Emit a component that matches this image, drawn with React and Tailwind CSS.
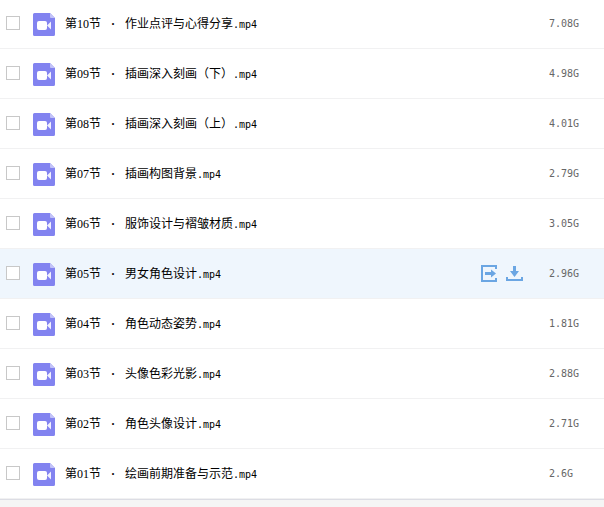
import React, { useState } from "react";
import clsx from "clsx";

const FILES = [
  { no: "10", title: "作业点评与心得分享", size: "7.08G" },
  { no: "09", title: "插画深入刻画（下）", size: "4.98G" },
  { no: "08", title: "插画深入刻画（上）", size: "4.01G" },
  { no: "07", title: "插画构图背景", size: "2.79G" },
  { no: "06", title: "服饰设计与褶皱材质", size: "3.05G" },
  { no: "05", title: "男女角色设计", size: "2.96G" },
  { no: "04", title: "角色动态姿势", size: "1.81G" },
  { no: "03", title: "头像色彩光影", size: "2.88G" },
  { no: "02", title: "角色头像设计", size: "2.71G" },
  { no: "01", title: "绘画前期准备与示范", size: "2.6G" },
];

function VideoIcon() {
  return (
    <svg className="mt-0.5 ml-[13px] shrink-0" width="22" height="23" viewBox="0 0 22 23" aria-hidden="true">
      <path d="M1.5 0H17l5 5v16.5a1.5 1.5 0 0 1-1.5 1.5h-19A1.5 1.5 0 0 1 0 21.5v-20A1.5 1.5 0 0 1 1.5 0Z" fill="#8283f0" />
      <path d="M17 0l5 5h-4a1 1 0 0 1-1-1Z" fill="#c3c3f8" />
      <rect x="4" y="8" width="10" height="9" rx="2" fill="#fff" />
      <path d="M14 12.5l4-4v8Z" fill="#f0f0fe" />
    </svg>
  );
}

function ShareIcon() {
  return (
    <svg width="17" height="17" viewBox="0 0 17 17" aria-hidden="true">
      <path d="M15 4V1H1v15h14v-3" fill="none" stroke="#6ba6e3" strokeWidth="2" />
      <path d="M4 7h6V4.5l5 4-5 4V10H4Z" fill="#6ba6e3" />
    </svg>
  );
}

function DownloadIcon() {
  return (
    <svg width="17" height="17" viewBox="0 0 17 17" aria-hidden="true">
      <path d="M1 12v3h15v-3" fill="none" stroke="#6ba6e3" strokeWidth="2" />
      <path d="M7 1h3v5h3l-4.5 6L4 6h3Z" fill="#6ba6e3" />
    </svg>
  );
}

function FileRow({ file, active, onSelect }) {
  const id = `file-${file.no}`;

  return (
    <li
      className={clsx(
        "flex h-[50px] items-center border-b border-[#f1f1f2] pl-1.5",
        active && "bg-[#eff6fd]"
      )}
      onClick={onSelect}
    >
      <input
        id={id}
        type="checkbox"
        className="mb-0.5 size-3.5 shrink-0 appearance-none border border-[#c8c8c8] bg-white checked:bg-[#6ba6e3]"
      />
      <VideoIcon />
      <label
        htmlFor={id}
        className="ml-2.5 min-w-0 flex-1 truncate text-xs text-black"
      >
        第{file.no}节
        <span className="inline-block w-6 text-center font-bold">·</span>
        {file.title}
        <span className="font-['DejaVu_Sans_Mono',monospace] text-[10px]">.mp4</span>
      </label>
      {active && (
        <div className="flex shrink-0 gap-2">
          <button type="button" aria-label="分享">
            <ShareIcon />
          </button>
          <button type="button" aria-label="下载">
            <DownloadIcon />
          </button>
        </div>
      )}
      <span className="ml-[26px] w-[55px] shrink-0 font-['DejaVu_Sans_Mono',monospace] text-[10px] text-[#666]">
        {file.size}
      </span>
    </li>
  );
}

export default function App() {
  const [active, setActive] = useState("05");

  return (
    <div className="min-h-screen overflow-hidden bg-[#f5f5f5] font-['Liberation_Serif','Noto_Sans_CJK_SC',serif]">
      <ul className="-mt-px border-b border-[#dcdde4] bg-white">
        {FILES.map((file) => (
          <FileRow
            key={file.no}
            file={file}
            active={active === file.no}
            onSelect={() => setActive(file.no)}
          />
        ))}
      </ul>
    </div>
  );
}
